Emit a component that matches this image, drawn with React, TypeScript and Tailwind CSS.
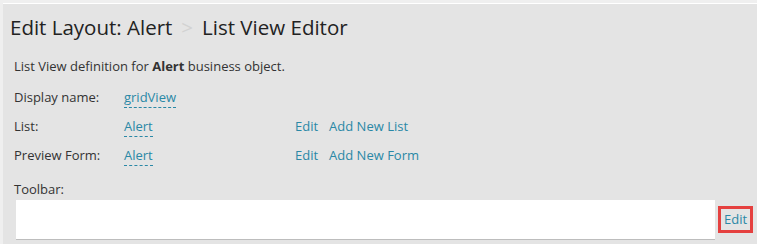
import type { ReactNode } from "react";

function Row({
  label,
  value,
  actions,
}: {
  label: string;
  value: string;
  actions?: string[];
}) {
  return (
    <div className="flex h-[29px] items-center">
      <span className="w-[110px] text-[#333]">{label}</span>
      <span className="w-[171px]">
        <DashedLink>{value}</DashedLink>
      </span>
      {actions && (
        <div className="flex gap-[11px] text-[#2a88a6]">
          {actions.map((a) => (
            <span key={a}>{a}</span>
          ))}
        </div>
      )}
    </div>
  );
}

function DashedLink({ children }: { children: ReactNode }) {
  return (
    <span className="border-b border-dashed border-[#2a88a6] pb-[1px] leading-[16px] text-[#2a88a6]">
      {children}
    </span>
  );
}

export default function App() {
  return (
    <div
      className="h-[244px] w-[757px] overflow-hidden bg-[#efefef] pl-[3px] pt-[3px] text-[13px]"
      style={{ fontFamily: '"Open Sans", "Noto Sans", sans-serif' }}
    >
      <div className="h-full border-t border-white bg-[#e4e4e4]">
        <h1 className="flex h-[44px] items-center pl-[7px] pt-[2px] text-[20.5px] text-[#222]">
          <span>Edit Layout: Alert</span>
          <span className="mx-[9px] text-[#d2d2d2]">&gt;</span>
          <span>List View Editor</span>
        </h1>

        <div className="pl-[11px]">
          <p className="mt-[9px] text-[#333]">
            List View definition for <b className="font-bold">Alert</b> business object.
          </p>

          <div className="mt-[7px]">
            <Row label="Display name:" value="gridView" />
            <Row label="List:" value="Alert" actions={["Edit", "Add New List"]} />
            <Row label="Preview Form:" value="Alert" actions={["Edit", "Add New Form"]} />
          </div>

          <p className="mt-[9px] text-[#333]">Toolbar:</p>

          <div className="mt-[1px] flex items-center">
            <div className="ml-[2px] h-[39px] w-[699px] bg-white shadow-[0_1px_0_#bdbdbd]" />
            <span className="ml-[3px] border-[3px] border-[#e5403f] px-[3px] leading-[21px] text-[#2a88a6]">
              Edit
            </span>
          </div>
        </div>
      </div>
    </div>
  );
}
